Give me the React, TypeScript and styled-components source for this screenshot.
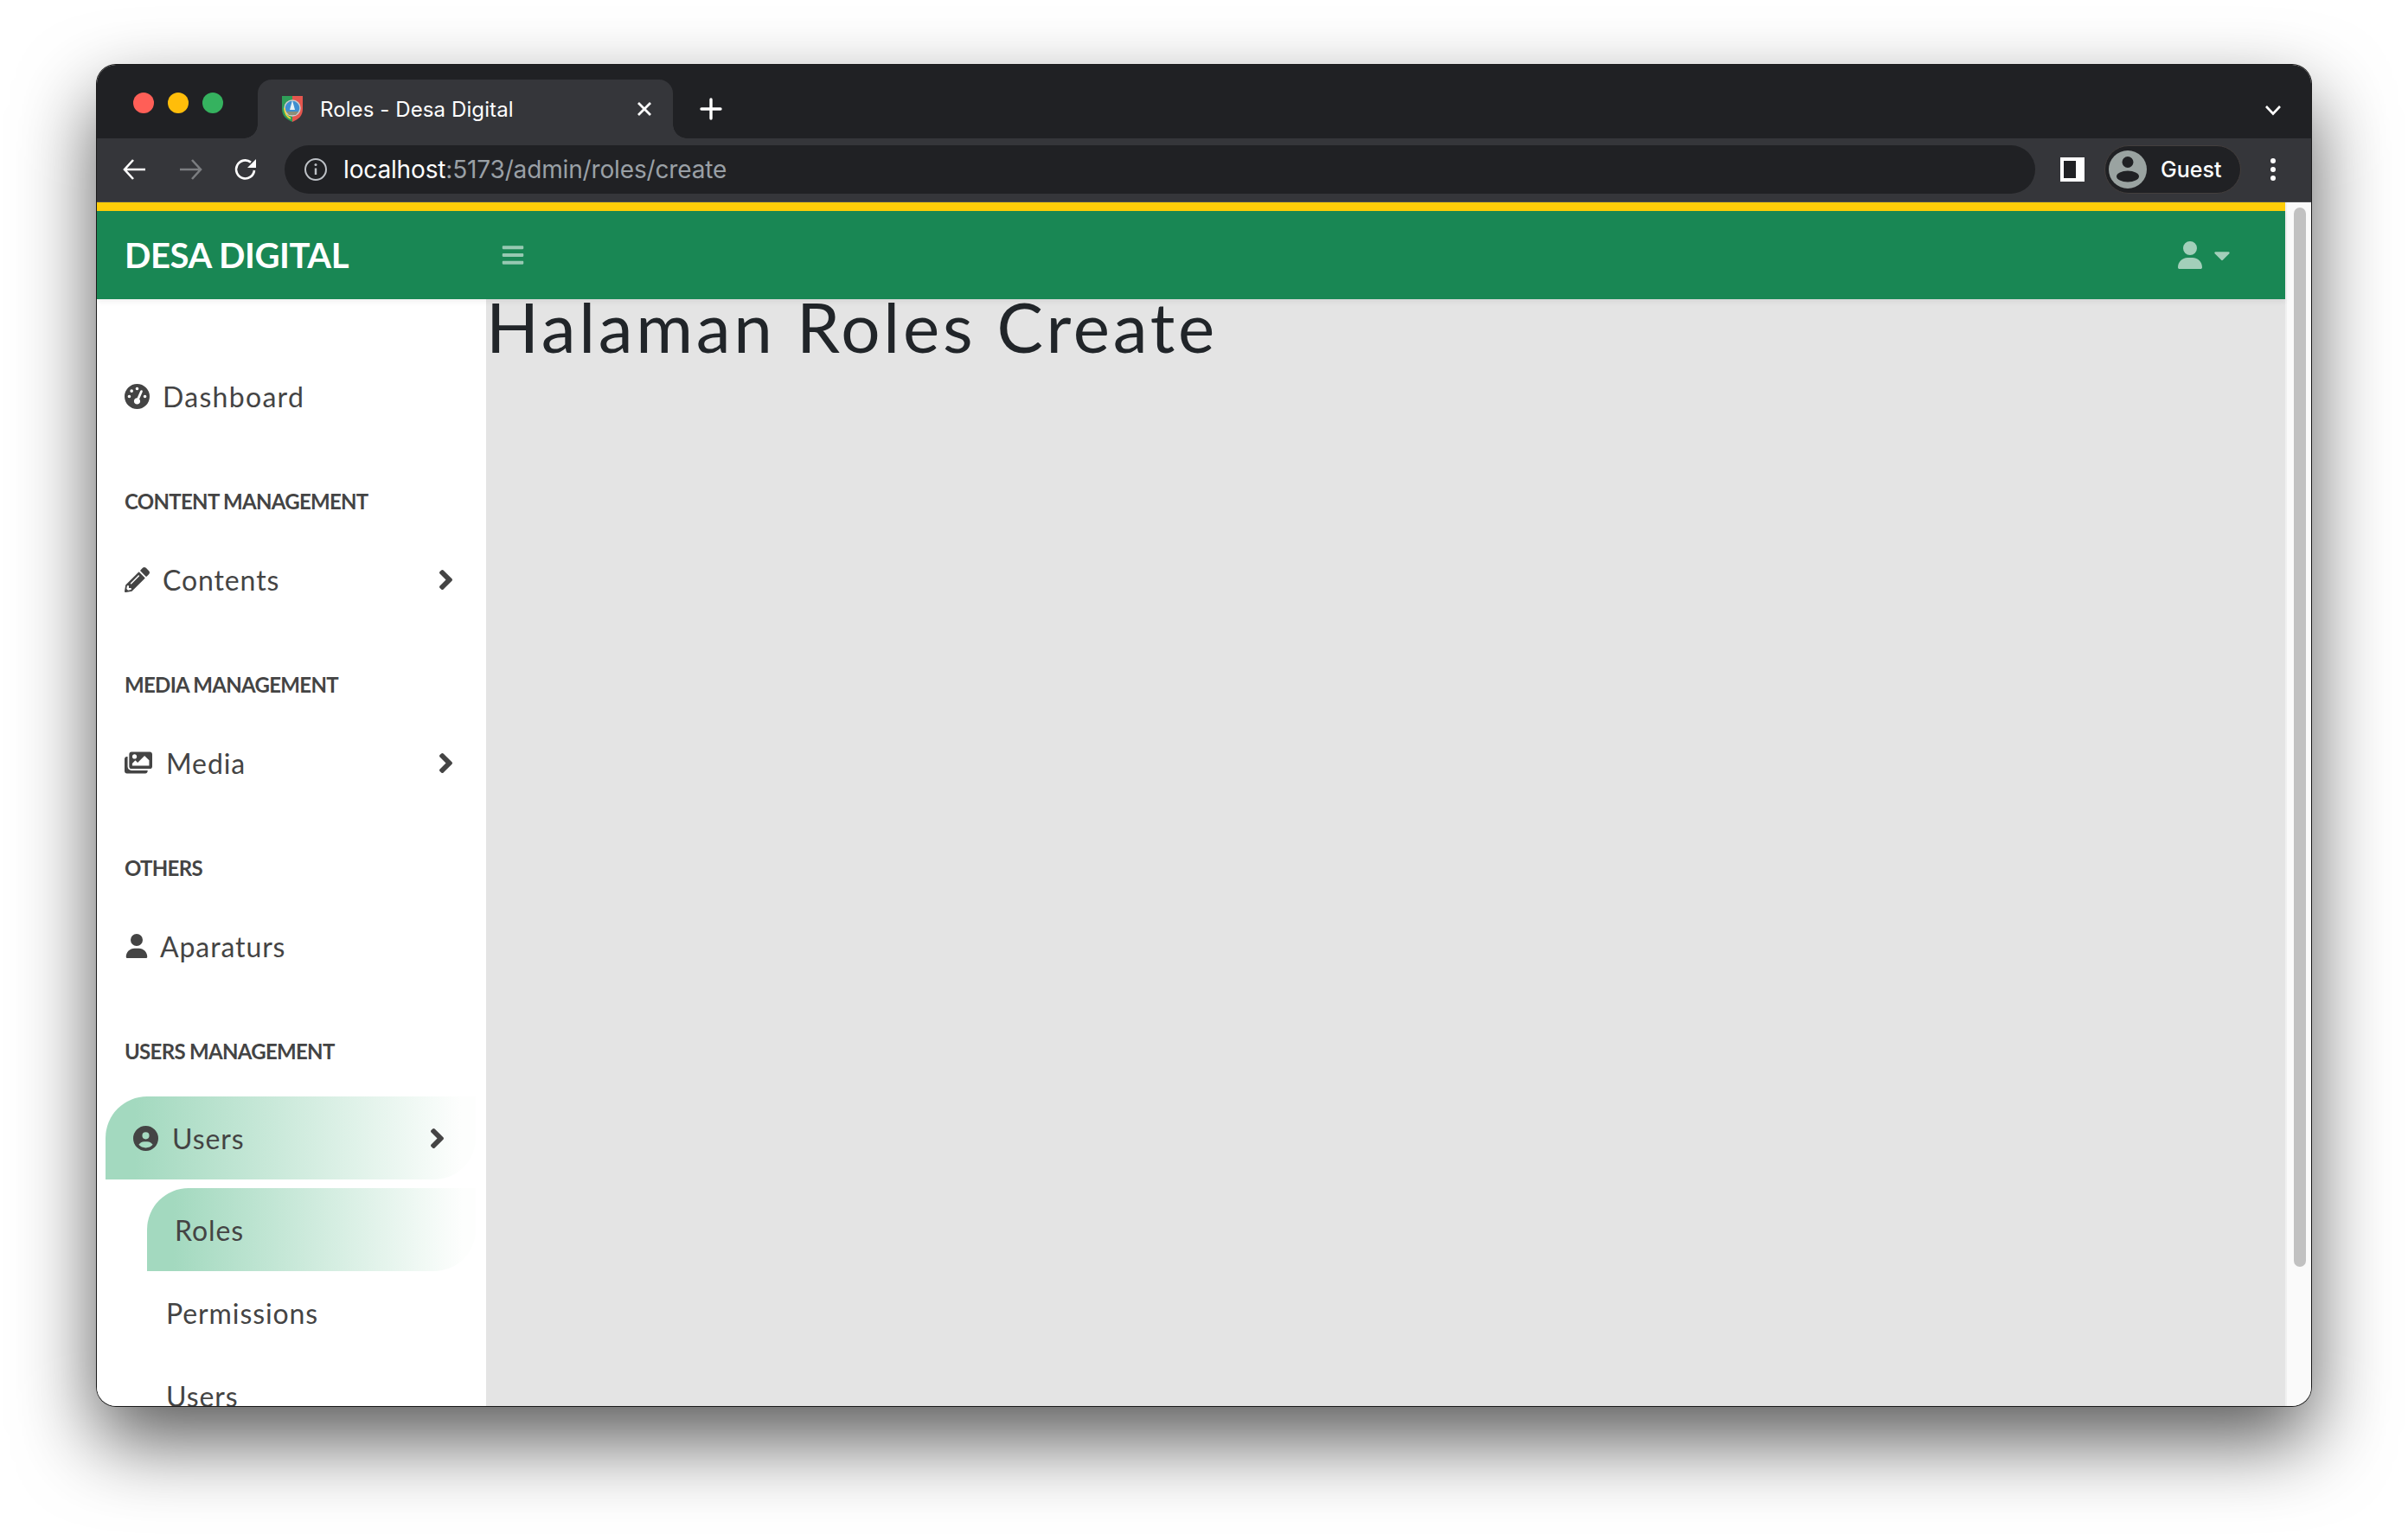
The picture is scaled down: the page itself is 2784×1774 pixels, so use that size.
import React from 'react';
import styled, { createGlobalStyle } from 'styled-components';
import {
  FaAngleRight,
  FaBars,
  FaCaretDown,
  FaImages,
  FaPencilAlt,
} from 'react-icons/fa';
import { FaCircleUser, FaGaugeHigh, FaUser } from 'react-icons/fa6';

const GlobalStyle = createGlobalStyle`
  html, body {
    margin: 0;
    height: 100%;
    overflow: hidden;
    background: #fff;
  }
  * { box-sizing: border-box; }
`;

const Page = styled.div`
  height: 1774px;
  padding: 75px 112px 148px;
`;

const Win = styled.div`
  display: flex;
  flex-direction: column;
  height: 1551px;
  border-radius: 22px;
  overflow: hidden;
  background: #fafafa;
  box-shadow: 0 0 0 1px #1a1a1a, 0 40px 90px rgba(0, 0, 0, 0.65);
`;

const TabStrip = styled.div`
  display: flex;
  align-items: flex-end;
  height: 85px;
  padding-left: 186px;
  padding-right: 34px;
  background: #202124;
  flex: none;
`;

const Lights = styled.div`
  position: absolute;
  display: flex;
  gap: 16px;
  margin-left: -144px;
  margin-bottom: 29px;
`;

const Light = styled.span<{ $color: string }>`
  width: 24px;
  height: 24px;
  border-radius: 50%;
  background: ${p => p.$color};
`;

const Tab = styled.div`
  position: relative;
  display: flex;
  align-items: center;
  width: 480px;
  height: 68px;
  padding: 0 23px 0 28px;
  background: #35363a;
  border-radius: 16px 16px 0 0;
  color: #fff;
  font: 400 24px "Inter", "Liberation Sans", sans-serif;
  &::before, &::after {
    content: "";
    position: absolute;
    bottom: 0;
    width: 16px;
    height: 16px;
  }
  &::before {
    left: -16px;
    background: radial-gradient(circle at 0 0, #202124 15.5px, #35363a 16px);
  }
  &::after {
    right: -16px;
    background: radial-gradient(circle at 100% 0, #202124 15.5px, #35363a 16px);
  }
`;

const TabTitle = styled.span`
  flex: 1;
  margin-left: 20px;
  letter-spacing: 0.1px;
`;

const NewTab = styled.div`
  display: flex;
  align-items: center;
  justify-content: center;
  width: 28px;
  height: 28px;
  margin: 0 0 20px 30px;
`;

const StripChevron = styled.div`
  display: flex;
  margin: 0 0 25px auto;
`;

const Toolbar = styled.div`
  display: flex;
  align-items: center;
  height: 74px;
  flex: none;
  padding: 0 0 1px 0;
  background: #35363a;
  border-bottom: 1px solid #4c4d50;
`;

const NavButtons = styled.div`
  display: flex;
  align-items: center;
  gap: 34px;
  padding-left: 29px;
  width: 216px;
`;

const Omnibox = styled.div`
  display: flex;
  align-items: center;
  width: 2024px;
  height: 56px;
  padding-left: 22px;
  border-radius: 28px;
  background: #202124;
  margin-left: 1px;
`;

const UrlText = styled.span`
  margin-left: 18px;
  color: #9aa0a6;
  font: 400 28px "Inter", "Liberation Sans", sans-serif;
  letter-spacing: -0.15px;
`;

const UrlHost = styled.span`
  color: #fff;
`;

const SidePanelIcon = styled.div`
  width: 28px;
  height: 28px;
  margin-left: 29px;
  border: solid #fff;
  border-width: 4px 10px 4px 4px;
  background: #202124;
`;

const GuestPill = styled.div`
  display: flex;
  align-items: center;
  width: 158px;
  height: 56px;
  margin-left: 23px;
  padding-left: 4px;
  border-radius: 28px;
  background: #202124;
  border: 1px solid #443f3e;
  color: #fff;
  font: 500 25px "Inter", "Liberation Sans", sans-serif;
`;

const GuestName = styled.span`
  margin-left: 16px;
`;

const Kebab = styled.div`
  display: flex;
  flex-direction: column;
  gap: 4px;
  margin-left: 34px;
`;

const KebabDot = styled.span`
  width: 6px;
  height: 6px;
  border-radius: 50%;
  background: #fff;
`;

const Viewport = styled.div`
  display: flex;
  flex: 1;
  min-height: 0;
`;

const Main = styled.div`
  display: flex;
  flex-direction: column;
  flex: 1;
  min-width: 0;
`;

const Scrollbar = styled.div`
  width: 30px;
  flex: none;
  padding: 6px 6px 0 8px;
  background: #fafafa;
  border-left: 2px solid #f0f0f0;
`;

const ScrollThumb = styled.div`
  height: 1225px;
  border-radius: 8px;
  background: #c1c1c1;
`;

const AccentBar = styled.div`
  height: 10px;
  flex: none;
  background: #ffcd09;
`;

const TopNav = styled.div`
  position: relative;
  display: flex;
  align-items: center;
  height: 102px;
  flex: none;
  padding: 0 58px 0 32px;
  background: #198754;
  box-shadow: 0 3px 6px rgba(0, 0, 0, 0.06);
  z-index: 1;
`;

const Brand = styled.div`
  width: 435px;
  color: #fff;
  font: 700 40px "Lato", "Liberation Sans", sans-serif;
  letter-spacing: -0.4px;
`;

const NavIcons = styled.div`
  display: flex;
  align-items: center;
  gap: 6px;
  margin-left: auto;
  color: rgba(255, 255, 255, 0.6);
`;

const Body = styled.div`
  display: flex;
  flex: 1;
  min-height: 0;
`;

const Sidebar = styled.nav`
  width: 450px;
  flex: none;
  overflow: hidden;
  padding-top: 64px;
  background: #fff;
  color: #444;
  font: 400 32px "Lato", "Liberation Sans", sans-serif;
`;

const SectionLabel = styled.div<{ $tight?: boolean }>`
  height: 40px;
  line-height: 40px;
  margin: 54px 0 ${p => (p.$tight ? 0 : 22)}px;
  padding-left: 32px;
  font-size: 24px;
  font-weight: 700;
  letter-spacing: -0.7px;
  color: #444;
`;

const NavRow = styled.div<{ $active?: boolean }>`
  display: flex;
  align-items: center;
  height: 96px;
  padding: 0 28px 0 32px;
  ${p => p.$active && `
    margin: 32px 12px 0 10px;
    padding: 0 26px 0 32px;
    border-radius: 48px 0 48px 0;
    background: linear-gradient(90deg, #a3d9bf 8%, #fdfefd 96%);
  `}
`;

const RowIcon = styled.span<{ $gap: number }>`
  display: flex;
  margin-right: ${p => p.$gap}px;
`;

const RowLabel = styled.span<{ $spacing?: number }>`
  flex: 1;
  letter-spacing: ${p => p.$spacing ?? 0.9}px;
`;

const SubRow = styled.div<{ $active?: boolean }>`
  display: flex;
  align-items: center;
  height: 96px;
  padding-left: 80px;
  letter-spacing: 0.9px;
  ${p => p.$active && `
    margin: 10px 12px 0 58px;
    padding-left: 32px;
    border-radius: 48px 0 48px 0;
    background: linear-gradient(90deg, #a3d9bf 8%, #fdfefd 96%);
  `}
`;

const Content = styled.main`
  flex: 1;
  min-width: 0;
  background: #e4e4e4;
`;

const Heading = styled.h1`
  margin: 0;
  color: #212529;
  font: 400 80px/62px "Lato", "Liberation Sans", sans-serif;
  letter-spacing: 3.75px;
`;

function Favicon() {
  return (
    <svg width="24" height="30" viewBox="0 0 24 30">
      <path d="M0 0H12V30C5 27 0 23 0 15Z" fill="#2f9e58" />
      <path d="M12 0H24V15C24 23 19 27 12 30Z" fill="#e5564e" />
      <circle cx="12" cy="14" r="9" fill="#3f8fd0" stroke="#c9c9c9" strokeWidth="1.5" />
      <path d="M12 5L15 16H9Z" fill="#e8f3f6" />
      <path d="M5 18H19L16 22H8Z" fill="#8a8f78" />
      <path d="M3 14C3 20 6 24 10 26" fill="none" stroke="#f2d43c" strokeWidth="1.6" />
    </svg>
  );
}

function Arrow({ flip, color }: { flip?: boolean; color: string }) {
  return (
    <svg width="30" height="30" viewBox="0 0 30 30" fill="none" stroke={color} strokeWidth="2.6"
      style={flip ? { transform: 'scaleX(-1)' } : undefined}>
      <path d="M3 15H27M17 4L27 15L17 26" />
    </svg>
  );
}

function Reload() {
  return (
    <svg width="30" height="30" viewBox="0 0 30 30" fill="none">
      <path d="M25 16A10.5 10.5 0 1 1 21 6.6" stroke="#fff" strokeWidth="2.6" />
      <path d="M27 3V13H17Z" fill="#fff" />
    </svg>
  );
}

function InfoIcon() {
  return (
    <svg width="28" height="28" viewBox="0 0 28 28" fill="none">
      <circle cx="14" cy="14" r="12" stroke="#bdc1c6" strokeWidth="2" />
      <path d="M14 12.5V20" stroke="#bdc1c6" strokeWidth="2.4" />
      <circle cx="14" cy="8.6" r="1.5" fill="#bdc1c6" />
    </svg>
  );
}

function GuestAvatar() {
  return (
    <svg width="44" height="44" viewBox="0 0 44 44">
      <circle cx="22" cy="22" r="22" fill="#9aa3a1" />
      <circle cx="22" cy="13.5" r="6.5" fill="#202124" />
      <ellipse cx="22" cy="30" rx="13" ry="6.5" fill="#202124" />
    </svg>
  );
}

const sections = [
  { label: 'CONTENT MANAGEMENT', row: 'Contents', icon: <FaPencilAlt size={29} />, gap: 15, arrow: true },
  { label: 'MEDIA MANAGEMENT', row: 'Media', icon: <FaImages size={32} />, gap: 16, arrow: true },
  { label: 'OTHERS', row: 'Aparaturs', icon: <FaUser size={28} />, gap: 13, arrow: false },
];

export default function App() {
  return (
    <Page>
      <GlobalStyle />
      <Win>
        <TabStrip>
          <Lights>
            <Light $color="#ff5f57" />
            <Light $color="#ffbd0a" />
            <Light $color="#35b25f" />
          </Lights>
          <Tab>
            <Favicon />
            <TabTitle>Roles - Desa Digital</TabTitle>
            <svg width="20" height="20" viewBox="0 0 20 20" stroke="#fff" strokeWidth="2.8">
              <path d="M3 3L17 17M17 3L3 17" />
            </svg>
          </Tab>
          <NewTab>
            <svg width="26" height="26" viewBox="0 0 26 26" stroke="#fff" strokeWidth="3.4" strokeLinecap="round">
              <path d="M13 2V24M2 13H24" />
            </svg>
          </NewTab>
          <StripChevron>
            <svg width="20" height="14" viewBox="0 0 20 14" fill="none" stroke="#fff" strokeWidth="2.6">
              <path d="M2 2L10 10.5L18 2" />
            </svg>
          </StripChevron>
        </TabStrip>

        <Toolbar>
          <NavButtons>
            <Arrow flip color="#fff" />
            <Arrow color="#7b7d80" />
            <Reload />
          </NavButtons>
          <Omnibox>
            <InfoIcon />
            <UrlText><UrlHost>localhost</UrlHost>:5173/admin/roles/create</UrlText>
          </Omnibox>
          <SidePanelIcon />
          <GuestPill>
            <GuestAvatar />
            <GuestName>Guest</GuestName>
          </GuestPill>
          <Kebab>
            <KebabDot />
            <KebabDot />
            <KebabDot />
          </Kebab>
        </Toolbar>

        <Viewport>
          <Main>
            <AccentBar />
            <TopNav>
              <Brand>DESA DIGITAL</Brand>
              <FaBars size={28} color="rgba(255,255,255,0.55)" />
              <NavIcons>
                <FaUser size={32} />
                <FaCaretDown size={30} />
              </NavIcons>
            </TopNav>
            <Body>
              <Sidebar>
                <NavRow>
                  <RowIcon $gap={15}><FaGaugeHigh size={29} /></RowIcon>
                  <RowLabel $spacing={1.3}>Dashboard</RowLabel>
                </NavRow>
                {sections.map(s => (
                  <React.Fragment key={s.label}>
                    <SectionLabel>{s.label}</SectionLabel>
                    <NavRow>
                      <RowIcon $gap={s.gap}>{s.icon}</RowIcon>
                      <RowLabel>{s.row}</RowLabel>
                      {s.arrow && <FaAngleRight size={37} />}
                    </NavRow>
                  </React.Fragment>
                ))}
                <SectionLabel $tight>USERS MANAGEMENT</SectionLabel>
                <NavRow $active>
                  <RowIcon $gap={16}><FaCircleUser size={29} /></RowIcon>
                  <RowLabel>Users</RowLabel>
                  <FaAngleRight size={37} />
                </NavRow>
                <SubRow $active>Roles</SubRow>
                <SubRow>Permissions</SubRow>
                <SubRow>Users</SubRow>
              </Sidebar>
              <Content>
                <Heading>Halaman Roles Create</Heading>
              </Content>
            </Body>
          </Main>
          <Scrollbar>
            <ScrollThumb />
          </Scrollbar>
        </Viewport>
      </Win>
    </Page>
  );
}
